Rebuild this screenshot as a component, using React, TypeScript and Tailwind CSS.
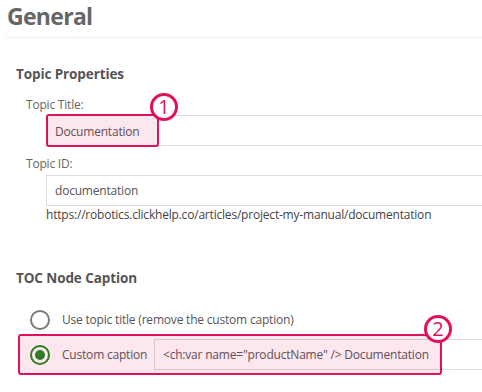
import React from 'react';

const PINK = 'border-[#e0115f]';

const Badge: React.FC<{ n: number; className: string }> = ({ n, className }) => (
    <div
        className={`absolute z-20 flex items-center justify-center w-[28px] h-[28px] rounded-full border-[3px] ${PINK} bg-white text-[#e0115f] text-[20px] leading-none tracking-normal ${className}`}
    >
        {n}
    </div>
);

const Radio: React.FC<{ checked?: boolean }> = ({ checked }) => (
    <div
        className={`w-[20px] h-[20px] shrink-0 rounded-full border-[2px] flex items-center justify-center bg-white ${
            checked ? 'border-[#1b8a1b]' : 'border-[#7a7a7a]'
        }`}
    >
        {checked && <div className="w-[10px] h-[10px] rounded-full bg-[#1b8a1b]" />}
    </div>
);

const App: React.FC = () => {
    return (
        <div
            className="w-[482px] h-[392px] overflow-hidden bg-white text-[#555] text-[12px] tracking-[-0.2px]"
            style={{ fontFamily: '"Open Sans", "Noto Sans", sans-serif' }}
        >
            {/* Page title */}
            <div className="ml-[6px] h-[38px] border-b border-[#ececec]">
                <h1 className="pl-[1px] text-[23px] leading-[32px] font-bold text-[#666] tracking-[-0.7px]">General</h1>
            </div>

            {/* Topic properties */}
            <h2 className="mt-[26px] pl-[16px] text-[13.5px] leading-[20px] font-bold text-[#555] tracking-[-0.1px]">
                Topic Properties
            </h2>

            <div className="mt-[11px] pl-[26px] leading-[20px] text-[#666]">Topic Title:</div>
            <div className="relative ml-[46px] mr-[-10px]">
                <div className="h-[31px] border border-[#dcdcdc] flex items-center pl-[8px] pt-[2px] text-[#555]">Documentation</div>
                {/* callout 1 */}
                <div className={`absolute left-0 top-[-1px] w-[113px] h-[33px] rounded-[3px] border-2 ${PINK} bg-[#e0115f]/10 pointer-events-none`} />
                <Badge n={1} className="left-[104px] top-[-22px]" />
            </div>

            <div className="mt-[8px] pl-[26px] leading-[20px] text-[#666]">Topic ID:</div>
            <div className="mt-[1px] ml-[46px] mr-[-10px] h-[31px] border border-[#dcdcdc] flex items-center pl-[8px] pt-[1px] text-[#555]">
                documentation
            </div>
            <div className="pl-[46px] leading-[18px] text-[#444] whitespace-nowrap">
                https://robotics.clickhelp.co/articles/project-my-manual/documentation
            </div>

            {/* TOC caption */}
            <h2 className="mt-[44px] pl-[16px] text-[13.5px] leading-[20px] font-bold text-[#555] tracking-[-0.1px]">
                TOC Node Caption
            </h2>

            <div className="mt-[22px] h-[20px] pl-[30px] flex items-center gap-[12px] text-[#555]">
                <Radio />
                <span>Use topic title (remove the custom caption)</span>
            </div>

            <div className="relative mt-[9px] h-[31px] pl-[30px] flex items-center">
                <Radio checked />
                <span className="ml-[12px] w-[92px] shrink-0 whitespace-nowrap text-[#555]">Custom caption</span>
                <div className="flex-1 mr-[-10px] h-[31px] border border-[#dcdcdc] bg-white flex items-center pl-[8px] text-[#555] whitespace-nowrap">
                    &lt;ch:var name="productName" /&gt; Documentation
                </div>
                {/* callout 2 */}
                <div className={`absolute left-[18px] top-[-5px] w-[424px] h-[41px] rounded-[3px] border-2 ${PINK} bg-[#e0115f]/10 pointer-events-none`} />
                <Badge n={2} className="left-[424px] top-[-24px]" />
            </div>
        </div>
    );
};

export default App;
